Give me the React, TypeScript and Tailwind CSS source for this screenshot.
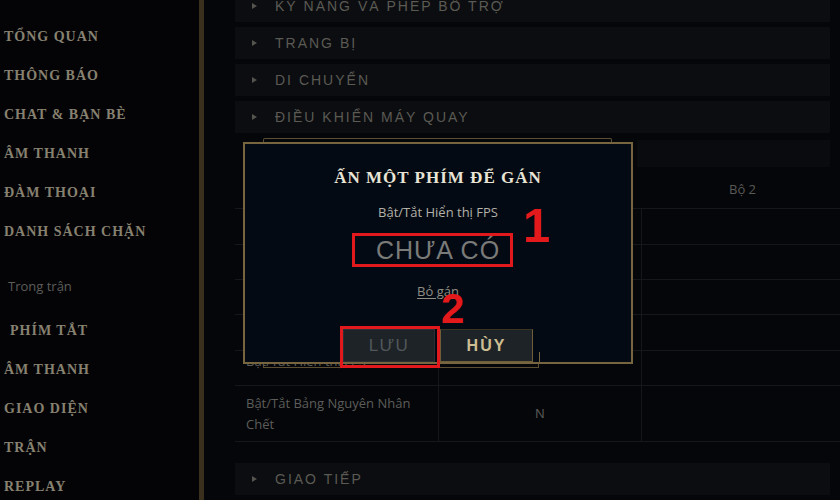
import React from 'react';

const SERIF = "font-['Liberation_Serif',serif]";
const SANS = "font-['Open_Sans','Noto_Sans',sans-serif]";
const ARIAL = "font-['Liberation_Sans',Arial,sans-serif]";

const TOP_MENU = ['TỔNG QUAN', 'THÔNG BÁO', 'CHAT & BẠN BÈ', 'ÂM THANH', 'ĐÀM THOẠI', 'DANH SÁCH CHẶN'];
const GAME_MENU = ['ÂM THANH', 'GIAO DIỆN', 'TRẬN', 'REPLAY'];

const SECTIONS = ['KỸ NĂNG VÀ PHÉP BỔ TRỢ', 'TRANG BỊ', 'DI CHUYỂN', 'ĐIỀU KHIỂN MÁY QUAY'];

// rows sitting under the dialog are mostly hidden
const ROWS: { label: string; key: string; h: string; pad?: string }[] = [
  { label: 'Mở Bảng Điểm', key: 'Tab', h: 'h-[36px]' },
  { label: 'Mở Cửa Hàng', key: 'P', h: 'h-[35px]' },
  { label: 'Mở Bảng Thông Số', key: 'C', h: 'h-[35px]' },
  { label: 'Bật/Tắt Khung Chat', key: 'Enter', h: 'h-[36px]' },
  { label: 'Bật/Tắt Hiển thị FPS', key: '', h: 'h-[35px]', pad: 'pb-[14px]' },
  { label: 'Bật/Tắt Bảng Nguyên Nhân Chết', key: 'N', h: 'h-[56px]' },
];

function SideItem({ label, className = '' }: { label: string; className?: string }) {
  return (
    <div className={`flex h-[39px] shrink-0 items-center pl-[4px] ${SERIF} text-[14px] font-bold tracking-[1px] text-[#878170] ${className}`}>
      {label}
    </div>
  );
}

function Sidebar() {
  return (
    <aside className="flex w-[204px] shrink-0 flex-col border-r-[5px] border-[#3a301d] bg-[#040407] pt-[17px]">
      {TOP_MENU.map((m) => (
        <SideItem key={m} label={m} />
      ))}
      <div className={`mt-[16px] flex h-[39px] shrink-0 items-center pl-[8px] ${SANS} text-[13px] text-[#5d5d59]`}>Trong trận</div>
      <SideItem label="PHÍM TẮT" className="mt-[5px] pl-[10px] text-[#9a9584]" />
      {GAME_MENU.map((m) => (
        <SideItem key={m} label={m} />
      ))}
    </aside>
  );
}

function SectionBar({ label, className = '' }: { label: string; className?: string }) {
  return (
    <div className={`flex h-[32px] w-[595px] shrink-0 items-center bg-[#0b0d11] pl-[17px] ${className}`}>
      <svg width="5" height="6" viewBox="0 0 5 6" className="shrink-0">
        <polygon points="0,0 5,3 0,6" fill="#55544e" />
      </svg>
      <span className={`ml-[18px] ${ARIAL} text-[14px] tracking-[2px] text-[#5b5a53]`}>{label}</span>
    </div>
  );
}

function Content() {
  return (
    <main className="-mt-[10px] flex min-w-0 flex-1 flex-col pl-[31px]">
      <div className="flex flex-col gap-[5px]">
        {SECTIONS.map((s) => (
          <SectionBar key={s} label={s} />
        ))}
      </div>

      {/* table header */}
      <div className="flex h-[75px] shrink-0 flex-col">
        <div className="ml-[402px] mt-[7px] h-[27px] w-[193px] bg-[#0a0b0f]" />
        <div className={`grid h-[41px] w-[609px] grid-cols-[203px_203px_203px] items-center pt-[4px] ${SANS} text-[13px] text-[#595956]`}>
          <span />
          <span className="text-center">Bộ 1</span>
          <span className="text-center">Bộ 2</span>
        </div>
      </div>

      {/* table rows */}
      <div className="w-[609px] shrink-0 border-b border-[#15171b]">
        {ROWS.map((r) => (
          <div
            key={r.label}
            className={`grid ${r.h} grid-cols-[203px_203px_203px] border-t border-[#15171b] ${SANS} text-[13px] leading-[21px] text-[#5c5d5a]`}
          >
            <div className={`flex items-center pl-[11px] pr-[8px] ${r.pad ?? ''}`}>{r.label}</div>
            <div className="flex items-center justify-center border-l border-[#15171b]">{r.key}</div>
            <div className="border-l border-[#15171b]" />
          </div>
        ))}
      </div>

      <SectionBar label="GIAO TIẾP" className="mt-[21px]" />
    </main>
  );
}

function BindModal() {
  return (
    <div className="absolute left-[243px] top-[142px] h-[222px] w-[390px]">
      {/* decorative ledges */}
      <div className="absolute -top-[4px] left-[20px] right-[21px] h-[5px] rounded-t-[2px] border-x border-t border-[#5c4f33]" />
      <div className="absolute left-[20px] top-full -mt-[1px] h-[5px] w-[276px] border-x border-b border-[#5c4f33]" />

      <div className="relative flex h-full flex-col items-center border-2 border-[#76653f] bg-[#040a13] pt-[24px]">
        <div className={`${SERIF} text-[17px] font-bold leading-[20px] tracking-[1px] text-[#e8e4d6]`}>ẤN MỘT PHÍM ĐỂ GÁN</div>
        <div className={`mt-[15px] ${SANS} text-[13px] leading-[18px] text-[#b3b1a9]`}>Bật/Tắt Hiển thị FPS</div>
        <div className={`mt-[14px] ${ARIAL} text-[25px] leading-[30px] tracking-[1px] text-[#7a7b79]`}>CHƯA CÓ</div>
        <div className={`mt-[17px] ${SANS} text-[13px] leading-[18px] text-[#8f8d85] underline underline-offset-2`}>Bỏ gán</div>

        <div className="mt-auto flex gap-[5px]">
          <button className={`h-[33px] w-[92px] border border-[#2c3035] bg-[#1e2328] ${ARIAL} text-[17px] tracking-[1.5px] text-[#51575a]`}>
            LƯU
          </button>
          <button
            className={`h-[33px] w-[93px] border border-[#6e5d37] border-t-[#3b3324] bg-[#1e2328] ${ARIAL} text-[16px] font-bold tracking-[2px] text-[#cdbe91]`}
          >
            HÙY
          </button>
        </div>
        <div className="absolute left-[294px] top-[208px] h-[12px] border-l border-[#76653f]" />
      </div>

      {/* red annotations */}
      <div className="absolute left-[109px] top-[91px] h-[34px] w-[161px] border-[3px] border-[#e1191c]" />
      <div className="absolute left-[97px] top-[184px] h-[42px] w-[100px] border-[3px] border-[#e1191c]" />
      <span className={`absolute left-[280px] top-[59px] ${ARIAL} text-[49px] font-bold leading-none text-[#e3191c]`}>1</span>
      <span className={`absolute left-[198px] top-[146px] ${ARIAL} text-[42px] font-bold leading-none text-[#e3191c]`}>2</span>
    </div>
  );
}

export default function App() {
  return (
    <div className="relative flex h-[500px] w-[840px] overflow-hidden bg-[#050609]">
      <Sidebar />
      <Content />
      <BindModal />
    </div>
  );
}
